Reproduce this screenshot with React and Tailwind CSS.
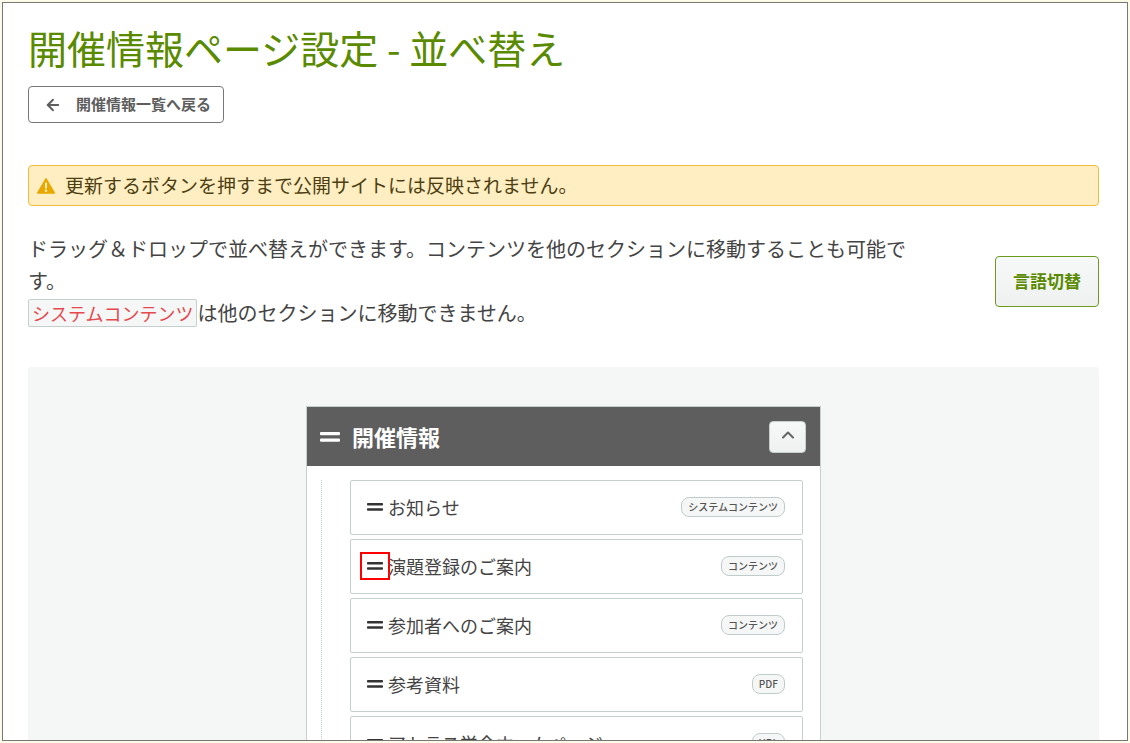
import React from 'react';
import { ArrowLeft, ChevronUp } from 'lucide-react';

const items = [
  { title: 'お知らせ', type: 'システムコンテンツ' },
  { title: '演題登録のご案内', type: 'コンテンツ', highlighted: true },
  { title: '参加者へのご案内', type: 'コンテンツ' },
  { title: '参考資料', type: 'PDF' },
  { title: 'アトラス学会ホームページ', type: 'URL' },
];

const DragHandle = ({ className }) => (
  <svg className={className} viewBox="0 0 20 10" preserveAspectRatio="none" fill="currentColor" aria-hidden="true">
    <rect x="0" y="0" width="20" height="3.2" rx="1" />
    <rect x="0" y="6.6" width="20" height="3.2" rx="1" />
  </svg>
);

const WarningIcon = () => (
  <svg className="h-4 w-[18px] shrink-0" viewBox="0 0 18 16" aria-hidden="true">
    <path d="M9 0.8 17.2 15H0.8Z" fill="#e8a800" stroke="#e8a800" strokeWidth="1.6" strokeLinejoin="round" />
    <path d="M9 5.4v4.4" stroke="#fff0c4" strokeWidth="1.9" strokeLinecap="round" />
    <circle cx="9" cy="12.8" r="1.2" fill="#fff0c4" />
  </svg>
);

const ContentItem = ({ item }) => (
  <li className="flex h-[55px] items-center justify-between rounded-xs border border-[#c5d0ce] bg-white pr-[17px] pb-px pl-[9px]">
    <div className="flex items-center">
      <button
        type="button"
        aria-label={`${item.title}を移動`}
        className={`flex h-7 w-[30px] cursor-move items-center justify-center border-2 ${
          item.highlighted ? 'border-[#ff0000]' : 'border-transparent'
        }`}
      >
        <DragHandle className="h-2 w-4 text-[#333]" />
      </button>
      <span className="-ml-0.5 text-[18px] leading-6">{item.title}</span>
    </div>
    <span className="rounded-[8px] border border-[#c0cccb] bg-[#f5f7f7] px-[6px] text-[10px] leading-[18px] font-medium text-[#555]">
      {item.type}
    </span>
  </li>
);

const SectionPanel = () => (
  <section className="mx-auto w-full max-w-[515px] border border-[#c5d0ce] bg-white">
    <header className="flex h-[59px] items-center justify-between bg-[#5e5e5e] pr-[14px] pl-[13px] text-white">
      <div className="flex items-center gap-3">
        <DragHandle className="h-[10px] w-5" />
        <h2 className="pb-0.5 text-[22px] leading-8 font-bold">開催情報</h2>
      </div>
      <button
        type="button"
        aria-label="閉じる"
        className="flex h-8 w-[37px] items-center justify-center rounded-[4px] border border-[#c5d0ce] bg-gradient-to-b from-[#f7f9f9] to-[#eff1f1] text-[#666]"
      >
        <ChevronUp className="mb-1 h-5 w-5" strokeWidth={2.5} />
      </button>
    </header>
    <div className="py-[14px] pr-[17px] pl-[14px]">
      <ul className="flex flex-col gap-1 border-l border-dotted border-[#c5d0ce] pl-7">
        {items.map((item) => (
          <ContentItem key={item.title} item={item} />
        ))}
      </ul>
    </div>
  </section>
);

export default function App() {
  return (
    <div
      lang="ja"
      className="h-screen overflow-hidden bg-[#fbfbe8] p-[2px] font-['Noto_Sans_CJK_JP',sans-serif] text-[#444]"
    >
      <main className="h-full overflow-hidden border border-[#777] bg-white pt-4 pr-7 pl-[25px]">
        <h1 className="text-[39px] leading-[56px] text-[#5a8a00]">開催情報ページ設定 - 並べ替え</h1>
        <a
          href="#list"
          className="mt-[11px] inline-flex h-[37px] items-center gap-[14px] rounded-[4px] border border-[#777] pr-3 pl-[15px] text-[15px] font-bold text-[#5e5e5e]"
        >
          <ArrowLeft className="h-[18px] w-[18px]" strokeWidth={2.5} />
          開催情報一覧へ戻る
        </a>

        <div
          role="alert"
          className="mt-[42px] flex h-[41px] items-center gap-[10px] rounded-[4px] border border-[#efbd3b] bg-[#ffeec2] px-2 text-[19px] text-[#4d3f12]"
        >
          <WarningIcon />
          更新するボタンを押すまで公開サイトには反映されません。
        </div>

        <div className="mt-[27px] flex items-center justify-between">
          <p className="max-w-[890px] text-[20px] leading-8">
            ドラッグ＆ドロップで並べ替えができます。コンテンツを他のセクションに移動することも可能です。
            <br />
            <code className="rounded-xs border border-[#c5d0ce] bg-[#f5f7f7] px-[3px] font-['Noto_Sans_CJK_JP',sans-serif] text-[18px] text-[#e5484d]">
              システムコンテンツ
            </code>
            は他のセクションに移動できません。
          </p>
          <button
            type="button"
            className="h-[51px] shrink-0 rounded-[4px] border border-[#6b9a1f] bg-gradient-to-b from-[#f7f9f9] to-[#eff1f1] px-[17px] text-[17px] font-bold text-[#5a8a00]"
          >
            言語切替
          </button>
        </div>

        <div id="list" className="mt-[38px] rounded-[3px] bg-[#f5f7f7] py-[39px]">
          <SectionPanel />
        </div>
      </main>
    </div>
  );
}
